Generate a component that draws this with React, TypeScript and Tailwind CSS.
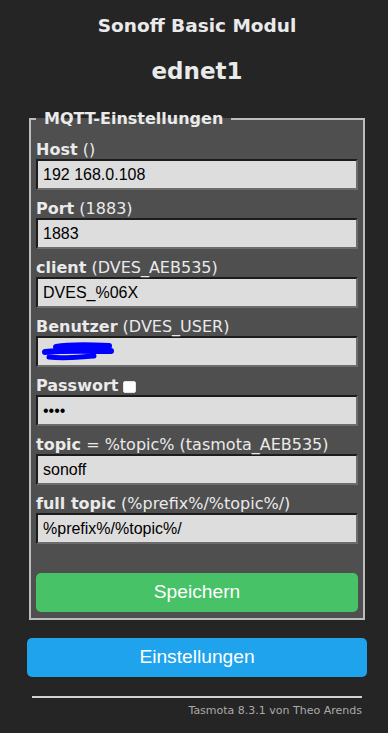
import React from 'react';

type Row = {
  label: string;
  hint: string;
  value?: string;
  kind?: 'text' | 'user' | 'password';
};

const rows: Row[] = [
  { label: 'Host', hint: ' ()', value: '192 168.0.108' },
  { label: 'Port', hint: ' (1883)', value: '1883' },
  { label: 'client', hint: ' (DVES_AEB535)', value: 'DVES_%06X' },
  { label: 'Benutzer', hint: ' (DVES_USER)', kind: 'user' },
  { label: 'Passwort', hint: '', kind: 'password' },
  { label: 'topic', hint: ' = %topic% (tasmota_AEB535)', value: 'sonoff' },
  { label: 'full topic', hint: ' (%prefix%/%topic%/)', value: '%prefix%/%topic%/' },
];

// blue marker scribble covering the user name
const Scribble = () => (
  <svg width="72" height="20" viewBox="0 0 72 20" className="-ml-px">
    <path d="M14 5 C 30 2, 50 3, 67 4" stroke="#0000ff" strokeWidth="6" strokeLinecap="round" fill="none" />
    <path d="M3 10 C 22 8, 48 9, 69 9" stroke="#0000ff" strokeWidth="6" strokeLinecap="round" fill="none" />
    <path d="M7 15 C 22 17, 36 15, 52 14" stroke="#0000ff" strokeWidth="5" strokeLinecap="round" fill="none" />
  </svg>
);

const Field: React.FC<{ row: Row }> = ({ row }) => (
  <div className="mb-[9px]">
    <div className="flex h-[19px] items-center whitespace-nowrap text-[16px] leading-[19px] text-[#eaeaea]">
      <b>{row.label}</b>
      <span className="whitespace-pre">{row.hint}</span>
      {row.kind === 'password' && (
        <span className="ml-[5px] mt-[2px] h-[12px] w-[13px] rounded-[2px] border border-[#e4e4e4] bg-white" />
      )}
    </div>
    <div className="flex h-[31px] items-center border-2 border-t-[#1c1c1c] border-l-[#1c1c1c] border-r-[#6c6c6c] border-b-[#6c6c6c] bg-[#dddddd] pl-[5px] font-['Liberation_Sans',Arial,sans-serif] text-[16px] text-black">
      {row.kind === 'user' && <Scribble />}
      {row.kind === 'password' && <span>••••</span>}
      {row.value && <span>{row.value}</span>}
    </div>
  </div>
);

export default function App() {
  return (
    <div className="min-h-[733px] bg-[#252525] pt-[15px] font-['DejaVu_Sans',Verdana,sans-serif]">
      <div className="ml-[27px] w-[340px]">
        <h3 className="text-center text-[18.5px] font-bold leading-[22px] text-[#eaeaea]">Sonoff Basic Modul</h3>
        <h2 className="mt-[21px] text-center text-[23px] font-bold leading-[27px] text-[#eaeaea]">ednet1</h2>

        <fieldset className="mx-[2px] mt-[24px] border-2 border-[#bdbdbd] bg-[#4f4f4f] px-[5px] pb-[6px] pt-[12px]">
          <legend className="px-[8px] text-[16px] font-bold leading-[19px] text-[#eaeaea]">MQTT-Einstellungen</legend>
          {rows.map((r) => (
            <Field key={r.label} row={r} />
          ))}
          <button className="mt-[20px] h-[39px] w-full rounded-[5px] bg-[#47c266] font-['Liberation_Sans',Arial,sans-serif] text-[19.2px] text-white">
            Speichern
          </button>
        </fieldset>

        <button className="mt-[18px] h-[39px] w-full rounded-[5px] bg-[#1fa3ec] font-['Liberation_Sans',Arial,sans-serif] text-[19.2px] text-white">
          Einstellungen
        </button>

        <div className="mx-[5px] mt-[19px] h-[2px] bg-[#d2d2d2]" />
        <div className="mt-[6px] pr-[5px] text-right text-[11px] leading-[13px] text-[#aaaaaa]">
          Tasmota 8.3.1 von Theo Arends
        </div>
      </div>
    </div>
  );
}
